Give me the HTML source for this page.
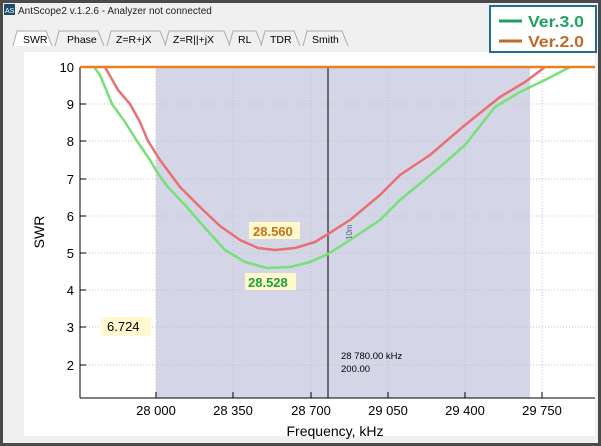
<!DOCTYPE html>
<html><head><meta charset="utf-8"><style>
body{margin:0;width:601px;height:446px;overflow:hidden;background:#4a4a4a;font-family:"Liberation Sans",sans-serif;}
#win{position:absolute;left:3px;top:3px;width:595px;height:440px;background:#f0f0f0;}
</style></head><body>
<div id="win"></div>
<svg width="601" height="446" style="position:absolute;left:0;top:0">
<rect x="4" y="4" width="11" height="11" fill="#1e4d6b"/>
<text x="5" y="13" font-size="7" fill="#fff" font-family="Liberation Sans">AS</text>
<text x="18" y="14" font-size="10" font-family="Liberation Sans" fill="#222">AntScope2 v.1.2.6 - Analyzer not connected</text>
<g font-family="Liberation Sans" font-size="10.5" fill="#000" stroke="#aaa">
<path d="M13,46 L17,31 L46,31 L52,46" fill="#fff"/>
<path d="M55,46 L59,31 L98,31 L104,46" fill="#f0f0f0"/>
<path d="M107,46 L111,31 L160,31 L166,46" fill="#f0f0f0"/>
<path d="M165,46 L169,31 L224,31 L230,46" fill="#f0f0f0"/>
<path d="M229,46 L233,31 L256,31 L262,46" fill="#f0f0f0"/>
<path d="M261,46 L265,31 L294,31 L300,46" fill="#f0f0f0"/>
<path d="M303,46 L307,31 L342,31 L348,46" fill="#f0f0f0"/>
</g>
<g font-family="Liberation Sans" font-size="10.5" fill="#000">
<text x="23" y="43">SWR</text><text x="67" y="43">Phase</text><text x="116" y="43">Z=R+jX</text>
<text x="173" y="43">Z=R||+jX</text><text x="238" y="43">RL</text><text x="270" y="43">TDR</text><text x="312" y="43">Smith</text>
</g>
<rect x="24" y="52" width="571" height="384" fill="#fff"/>
<rect x="156" y="67" width="374" height="331" fill="#d4d6e8"/>
<g stroke="#c0c0c8" stroke-dasharray="1,2" stroke-width="1">
<line x1="80" y1="104" x2="595" y2="104"/><line x1="80" y1="141" x2="595" y2="141"/><line x1="80" y1="179" x2="595" y2="179"/>
<line x1="80" y1="216" x2="595" y2="216"/><line x1="80" y1="253" x2="595" y2="253"/><line x1="80" y1="290" x2="595" y2="290"/>
<line x1="80" y1="327" x2="595" y2="327"/><line x1="80" y1="365" x2="595" y2="365"/>
<line x1="156" y1="67" x2="156" y2="398"/><line x1="233" y1="67" x2="233" y2="398"/><line x1="311" y1="67" x2="311" y2="398"/>
<line x1="388" y1="67" x2="388" y2="398"/><line x1="465" y1="67" x2="465" y2="398"/><line x1="542" y1="67" x2="542" y2="398"/>
</g>
<line x1="80" y1="67" x2="80" y2="398" stroke="#000"/>
<line x1="80" y1="398" x2="595" y2="398" stroke="#000"/>
<g stroke="#000">
<line x1="80" y1="67" x2="86" y2="67"/><line x1="80" y1="104" x2="86" y2="104"/><line x1="80" y1="141" x2="86" y2="141"/><line x1="80" y1="179" x2="86" y2="179"/><line x1="80" y1="216" x2="86" y2="216"/><line x1="80" y1="253" x2="86" y2="253"/><line x1="80" y1="290" x2="86" y2="290"/><line x1="80" y1="327" x2="86" y2="327"/><line x1="80" y1="365" x2="86" y2="365"/>
<line x1="156" y1="392" x2="156" y2="398"/><line x1="233" y1="392" x2="233" y2="398"/><line x1="311" y1="392" x2="311" y2="398"/><line x1="388" y1="392" x2="388" y2="398"/><line x1="465" y1="392" x2="465" y2="398"/><line x1="542" y1="392" x2="542" y2="398"/>
</g>
<g font-family="Liberation Sans" font-size="13" fill="#000" text-anchor="end">
<text x="74" y="72">10</text><text x="74" y="109">9</text><text x="74" y="146">8</text><text x="74" y="184">7</text><text x="74" y="221">6</text><text x="74" y="258">5</text><text x="74" y="295">4</text><text x="74" y="332">3</text><text x="74" y="370">2</text>
</g>
<g font-family="Liberation Sans" font-size="13" fill="#000" text-anchor="middle">
<text x="156" y="415">28 000</text><text x="233" y="415">28 350</text><text x="311" y="415">28 700</text><text x="388" y="415">29 050</text><text x="465" y="415">29 400</text><text x="542" y="415">29 750</text>
<text x="335" y="436" font-size="14">Frequency, kHz</text>
<text transform="translate(44,232) rotate(-90)" font-size="14">SWR</text>
</g>
<line x1="328" y1="67" x2="328" y2="398" stroke="#000"/>
<text x="341" y="359" font-size="9.5" font-family="Liberation Sans">28 780.00 kHz</text>
<text x="341" y="372" font-size="9.5" font-family="Liberation Sans">200.00</text>
<text transform="translate(352,240) rotate(-90)" font-size="8" fill="#55608a" font-family="Liberation Sans">10m</text>
<polyline fill="none" stroke="#e87070" stroke-width="2.5" stroke-linejoin="round" points="105,67 118,90 130,104 140,122 148,141 160,160 180,187 200,207 220,226 240,240 258,248 275,250 295,248 315,242 328,234 350,220 380,195 400,175 430,155 465,125 500,97 525,82 545,67"/>
<polyline fill="none" stroke="#77e077" stroke-width="2.5" stroke-linejoin="round" points="94,67 100,75 112,104 125,122 137,141 150,160 157,172 167,186 185,205 205,228 225,250 245,262 267,268 290,267 310,262 328,254 350,240 380,220 400,200 440,167 465,145 495,107 520,92 545,80 570,67"/>
<line x1="80" y1="67" x2="595" y2="67" stroke="#e8801e" stroke-width="2.5"/>
<rect x="249" y="222" width="51" height="17" fill="#fff8c8"/>
<text x="253" y="236" font-size="13" font-weight="bold" fill="#c87020" font-family="Liberation Sans">28.560</text>
<rect x="245" y="273" width="51" height="17" fill="#fff8c8"/>
<text x="248" y="287" font-size="13" font-weight="bold" fill="#20a040" font-family="Liberation Sans">28.528</text>
<rect x="101" y="317" width="50" height="19" fill="#fff8d0"/>
<text x="107" y="331" font-size="13" fill="#000" font-family="Liberation Sans">6.724</text>
<rect x="490" y="6" width="106" height="46" fill="#fff" stroke="#1f6f8b" stroke-width="2"/>
<line x1="499" y1="21" x2="522" y2="21" stroke="#20a060" stroke-width="3"/>
<line x1="499" y1="41" x2="522" y2="41" stroke="#c06a28" stroke-width="3"/>
<text x="528" y="27" font-size="16" font-weight="bold" fill="#20a060" font-family="Liberation Sans" textLength="56" lengthAdjust="spacingAndGlyphs">Ver.3.0</text>
<text x="528" y="47" font-size="16" font-weight="bold" fill="#c06a28" font-family="Liberation Sans" textLength="56" lengthAdjust="spacingAndGlyphs">Ver.2.0</text>
</svg>
</body></html>
